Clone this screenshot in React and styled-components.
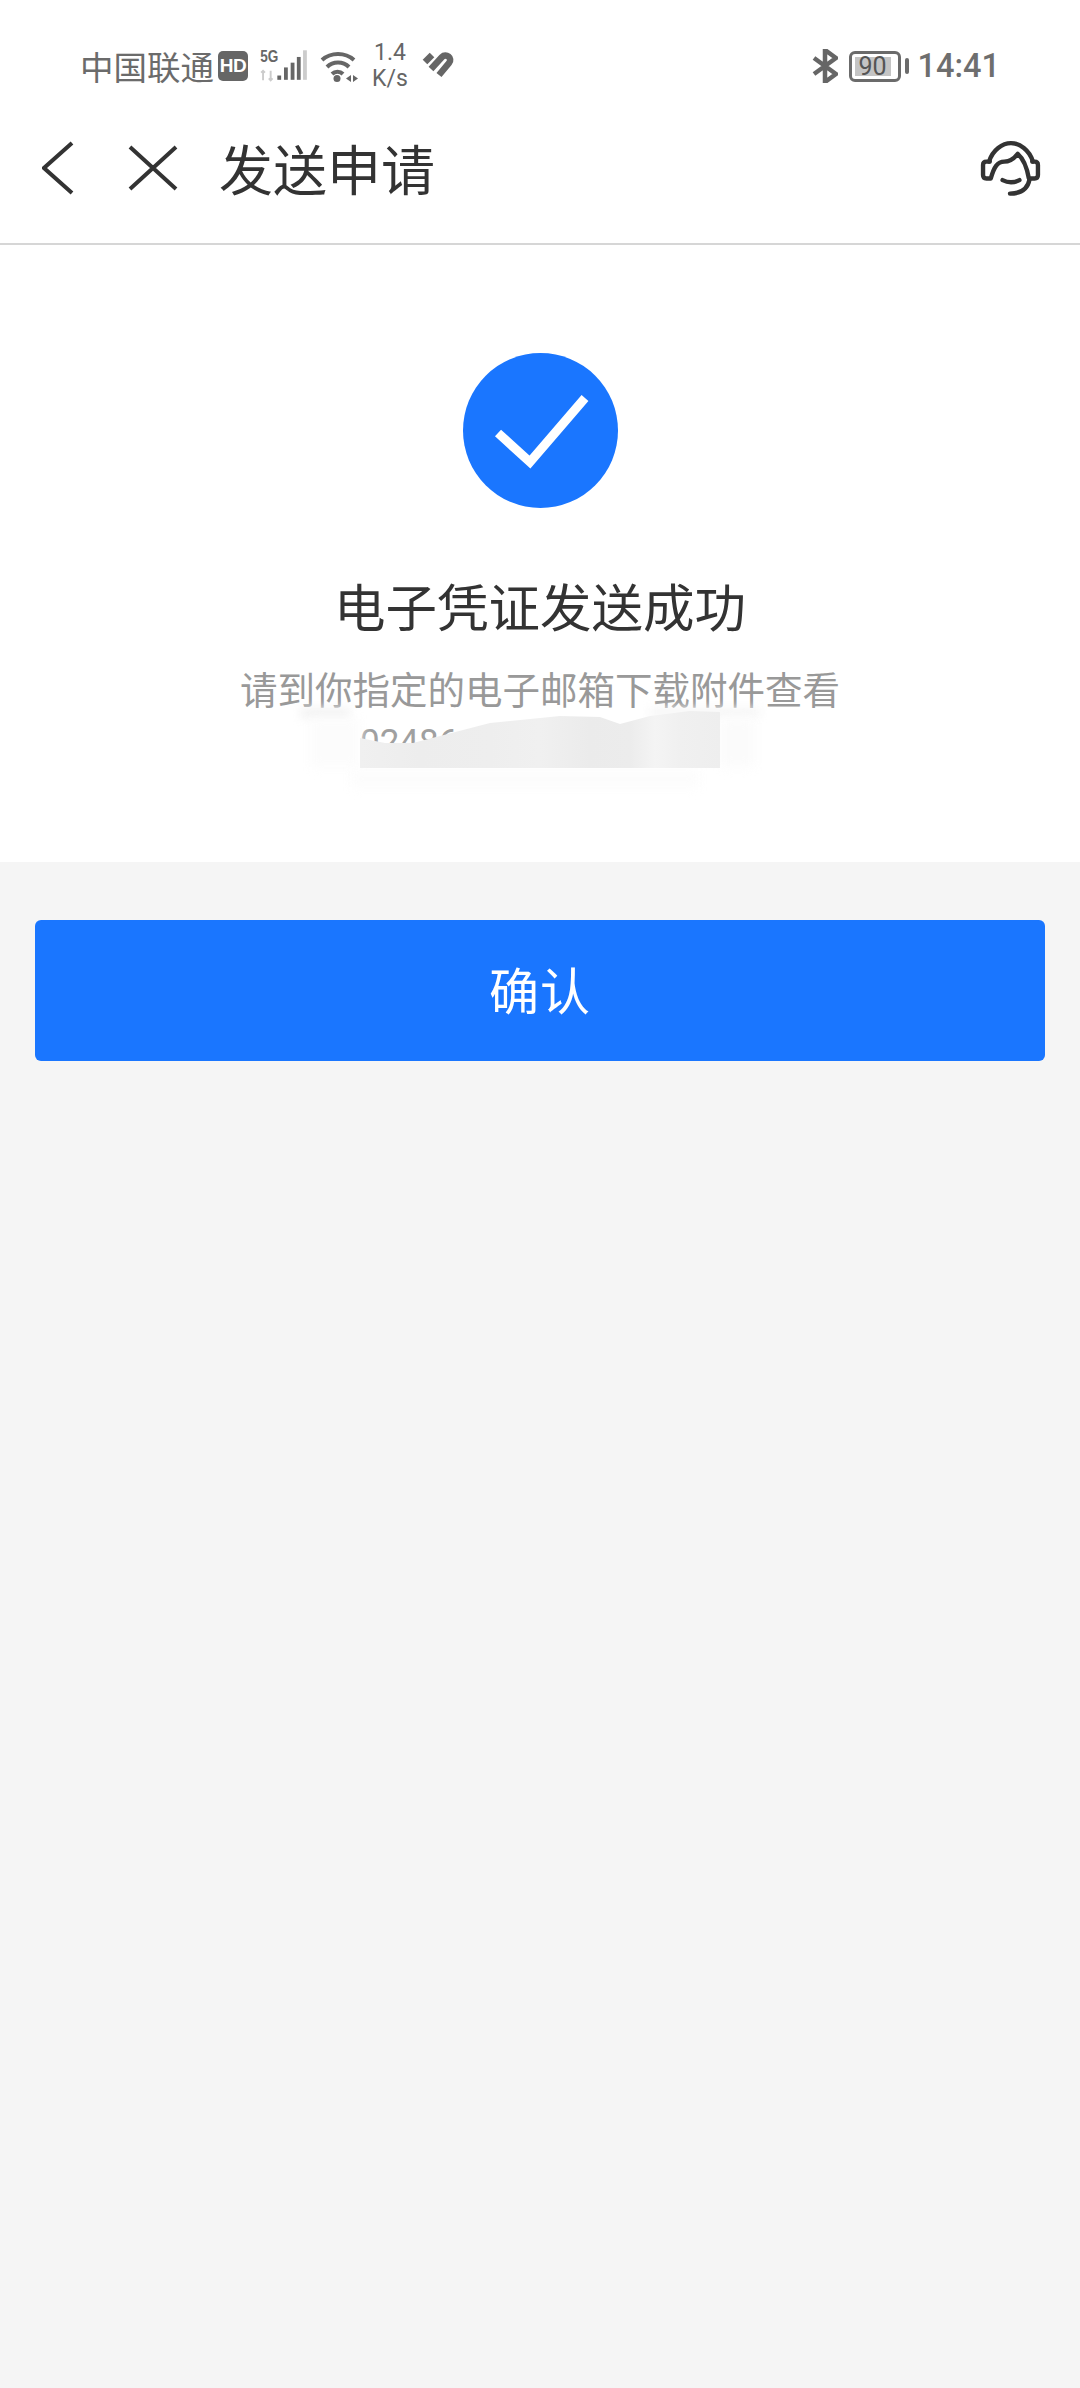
import React from "react";
import styled, { createGlobalStyle } from "styled-components";

const GlobalStyle = createGlobalStyle`
	html, body {
		margin: 0;
		padding: 0;
		background: #f5f5f5;
	}
	* {
		box-sizing: border-box;
	}
`;

const CJK = `"Noto Sans CJK SC", "Noto Sans", sans-serif`;

const Page = styled.div`
	width: 1080px;
	height: 2388px;
	display: flex;
	flex-direction: column;
	background: #f5f5f5;
	font-family: ${CJK};
	overflow: hidden;
`;

const Header = styled.header`
	background: #fff;
	height: 245px;
	border-bottom: 2px solid #d6d6d6;
	display: flex;
	flex-direction: column;
`;

const StatusBar = styled.div`
	height: 112px;
	padding: 20px 80px 0;
	display: flex;
	align-items: center;
	justify-content: space-between;
	color: #666;
`;

const StatusGroup = styled.div`
	display: flex;
	align-items: center;
	gap: ${(props) => props.gap || 0}px;
`;

const CarrierLabel = styled.div`
	display: flex;
	align-items: center;
	gap: 4px;
`;

const Carrier = styled.span`
	font-size: 33.5px;
	line-height: 40px;
	color: #6b6b6b;
`;

const HdBadge = styled.span`
	width: 30px;
	height: 30px;
	border-radius: 5px;
	background: #666;
	color: #fff;
	display: flex;
	align-items: center;
	justify-content: center;
	font: bold 19px "Liberation Sans", sans-serif;
	letter-spacing: -0.5px;
`;

const Speed = styled.span`
	width: 40px;
	font: 23px/26px "Roboto", sans-serif;
	text-align: center;
	color: #666;
`;

const Battery = styled.span`
	width: 52px;
	height: 31px;
	padding: 3px;
	margin-left: 11px;
	border: 3px solid #6b6b6b;
	border-radius: 6px;
	display: flex;
`;

const BatteryFill = styled.span`
	width: ${(props) => props.level}%;
	background: #c4c4c4;
	color: #555;
	display: flex;
	align-items: center;
	justify-content: center;
	font: 25px "Roboto", sans-serif;
`;

const BatteryNub = styled.span`
	width: 4px;
	height: 16px;
	margin-left: 4px;
	border-radius: 2px;
	background: #6b6b6b;
`;

const Clock = styled.span`
	margin-left: 9px;
	font: 500 32.5px "Roboto", sans-serif;
	color: #6e6e6e;
`;

const NavBar = styled.nav`
	flex: 1;
	padding: 0 37px 20px 42px;
	display: flex;
	align-items: center;
`;

const NavTitle = styled.h1`
	margin: 0 0 0 41px;
	flex: 1;
	font-size: 54px;
	font-weight: 400;
	line-height: 70px;
	color: #333;
`;

const CloseIcon = styled.svg`
	margin-left: 54px;
`;

const Result = styled.section`
	height: 617px;
	padding-top: 108px;
	background: #fff;
	display: flex;
	flex-direction: column;
	align-items: center;
`;

const ResultTitle = styled.h2`
	margin: 62px 0 0;
	font-size: 51.5px;
	font-weight: 400;
	line-height: 70px;
	color: #333;
`;

const ResultHint = styled.p`
	margin: 21px 0 0;
	font-size: 37.5px;
	line-height: 54px;
	color: #999;
`;

const MailLine = styled.div`
	position: relative;
	width: 460px;
	height: 51px;
	margin-top: 2px;
	padding-left: 50px;
	font: 35px/51px "Roboto", sans-serif;
	color: #a0a0a0;
`;

const Smudge = styled.span`
	position: absolute;
	left: ${(props) => props.x}px;
	top: ${(props) => props.y}px;
	width: ${(props) => props.w}px;
	height: ${(props) => props.h}px;
	background: ${(props) => props.color};
	filter: blur(${(props) => props.blur}px);
`;

const RedactionBlock = styled.span`
	position: absolute;
	left: 50px;
	top: -7px;
	width: 360px;
	height: 58px;
	clip-path: polygon(0 28px, 25px 33px, 53px 33px, 130px 13px, 200px 6px, 240px 7px, 260px 14px, 290px 6px, 330px 1px, 360px 2px, 360px 58px, 0 58px);
	background: linear-gradient(
		90deg,
		#f0f0f0 0,
		#ededed 60px,
		#eeeeee 130px,
		#f0f0f0 180px,
		#ebebeb 230px,
		#ececec 270px,
		#f4f4f4 295px,
		#f0f0f0 320px,
		#eeeeee 360px
	);
`;

const Actions = styled.div`
	padding: 58px 35px 0;
`;

const ConfirmButton = styled.button`
	width: 100%;
	height: 141px;
	padding: 0 0 6px;
	border: 0;
	border-radius: 6px;
	background: #1a76ff;
	color: #fff;
	font-family: inherit;
	font-size: 50px;
	letter-spacing: 1px;
`;

function SignalIcon() {
	return (
		<svg width="48" height="40" viewBox="0 -4 50 42">
			<text x="0" y="13" fontFamily="Liberation Sans" fontWeight="700" fontSize="17" textLength="19" lengthAdjust="spacingAndGlyphs" fill="#666">5G</text>
			<path d="M3 22v10M1 24l2-2 2 2M11 32V22M9 30l2 2 2-2" stroke="#ccc" strokeWidth="2" fill="none" />
			<rect x="18" y="27" width="4" height="4.5" fill="#666" />
			<rect x="25" y="18.5" width="4" height="13" fill="#666" />
			<rect x="32" y="13.5" width="4" height="18" fill="#666" />
			<rect x="38.500" y="7.500" width="4" height="24" fill="#666" />
			<rect x="45" y="0.500" width="4" height="31" fill="#ccc" />
		</svg>
	);
}

function WifiIcon() {
	return (
		<svg width="38" height="34" viewBox="0 0 38 34" fill="none" stroke="#666" strokeWidth="4">
			<path d="M2 11C11 3 25 3 34 11" />
			<path d="M7 18C13 12 23 12 29 18" />
			<path d="M12 25C15 22 20 22 23 25" />
			<circle cx="17" cy="29.500" r="3.500" fill="#666" stroke="none" />
			<path d="M26 29.500l5-3.500v7zM33 26l5 3.500-5 3.500z" fill="#666" stroke="none" />
		</svg>
	);
}

function HeartIcon() {
	return (
		<svg width="34" height="30" viewBox="0 0 34 30" fill="none" stroke="#666" strokeWidth="6.500">
			<path d="M3 11L10 4" />
			<path d="M9 18L20 6C24 2 31 7 27 12L17 24" />
		</svg>
	);
}

function BluetoothIcon() {
	return (
		<svg width="26" height="34" viewBox="0 0 26 34" fill="none" stroke="#666" strokeWidth="4.500">
			<path d="M2 9l22 16-11 8V1l11 8L2 25" />
		</svg>
	);
}

function BackIcon() {
	return (
		<svg width="32" height="54" viewBox="0 0 32 54" fill="none" stroke="#333" strokeWidth="4">
			<path d="M30 2L2 27l28 25" />
		</svg>
	);
}

function HeadsetIcon() {
	return (
		<svg width="64" height="58" viewBox="120 68 190 172" fill="none" stroke="#333" strokeWidth="13" strokeLinecap="round" strokeLinejoin="round">
			<path d="M150 135C160 100 190 80 215 80C240 80 270 100 280 135" />
			<path d="M152 135H142Q132 135 132 145V175Q132 185 142 185H155C165 150 175 135 195 135C215 135 225 125 235 112C250 125 262 150 268 185H285Q295 185 295 175V145Q295 135 285 135H278" />
			<path d="M270 188C265 215 245 230 212 230" />
			<path d="M190 190Q215 203 240 190" />
		</svg>
	);
}

function SuccessIcon() {
	return (
		<svg width="155" height="155" viewBox="0 0 155 155">
			<circle cx="77.500" cy="77.500" r="77.500" fill="#1a76ff" />
			<path d="M35 80L67 109L122 45" fill="none" stroke="#fff" strokeWidth="9" />
		</svg>
	);
}

export default function App() {
	return (
		<Page>
			<GlobalStyle />
			<Header>
				<StatusBar>
					<StatusGroup gap={12}>
						<CarrierLabel>
							<Carrier>中国联通</Carrier>
							<HdBadge>HD</HdBadge>
						</CarrierLabel>
						<SignalIcon />
						<WifiIcon />
						<Speed>
							1.4
							<br />
							K/s
						</Speed>
						<HeartIcon />
					</StatusGroup>
					<StatusGroup>
						<BluetoothIcon />
						<Battery>
							<BatteryFill level={90}>90</BatteryFill>
						</Battery>
						<BatteryNub />
						<Clock>14:41</Clock>
					</StatusGroup>
				</StatusBar>
				<NavBar>
					<BackIcon />
					<CloseIcon width="50" height="46" viewBox="0 0 50 46" fill="none" stroke="#333" strokeWidth="4">
						<path d="M2 2L48 44M48 2L2 44" />
					</CloseIcon>
					<NavTitle>发送申请</NavTitle>
					<HeadsetIcon />
				</NavBar>
			</Header>
			<Result>
				<SuccessIcon />
				<ResultTitle>电子凭证发送成功</ResultTitle>
				<ResultHint>请到你指定的电子邮箱下载附件查看</ResultHint>
				<MailLine>
					02486
					<Smudge x={-10} y={-9} w={50} h={10} color="#f3f3f3" blur={5} />
					<Smudge x={0} y={2} w={50} h={48} color="#fcfcfc" blur={6} />
					<Smudge x={340} y={-9} w={110} h={8} color="#f5f5f5" blur={5} />
					<Smudge x={410} y={2} w={35} h={48} color="#fbfbfb" blur={6} />
					<Smudge x={40} y={54} w={350} h={16} color="#fcfcfc" blur={6} />
					<RedactionBlock />
				</MailLine>
			</Result>
			<Actions>
				<ConfirmButton>确认</ConfirmButton>
			</Actions>
		</Page>
	);
}
